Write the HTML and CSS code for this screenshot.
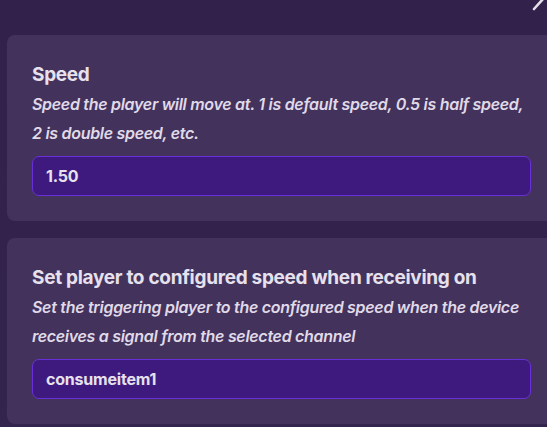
FILE: index.html
```html
<!DOCTYPE html>
<html>
<head>
<meta charset="utf-8">
<link rel="stylesheet" href="styles.css">
</head>
<body>
<svg class="corner-icon" width="16" height="12" viewBox="0 0 16 12"><path d="M3 9 L12 -1" stroke="#e4dfeb" stroke-width="2.6" stroke-linecap="round" fill="none"/></svg>
<div class="panel">
  <section class="card">
    <h2 class="title">Speed</h2>
    <p class="desc">Speed the player will move at. 1 is default speed, 0.5 is half speed, 2 is double speed, etc.</p>
    <div class="field">1.50</div>
  </section>
  <section class="card">
    <h2 class="title">Set player to configured speed when receiving on</h2>
    <p class="desc">Set the triggering player to the configured speed when the device receives a signal from the selected channel</p>
    <div class="field">consumeitem1</div>
  </section>
</div>
</body>
</html>
```
FILE: styles.css
```css
html, body {
  margin: 0;
  padding: 0;
}
body {
  width: 547px;
  height: 427px;
  overflow: hidden;
  background: linear-gradient(180deg, #32224b 0%, #33244d 100%);
  font-family: Inter, "Noto Sans", sans-serif;
  color: #e7e1ee;
  position: relative;
}
.corner-icon {
  position: absolute;
  right: 0;
  top: 0;
}
.panel {
  display: flex;
  flex-direction: column;
  gap: 17px;
  padding: 35px 0 0 7px;
}
.card {
  width: 549px;
  box-sizing: border-box;
  background: #42325c;
  border-radius: 8px;
  padding: 29px 25px 25px 25px;
}
.title {
  margin: 0;
  font-size: 19px;
  line-height: 22px;
  font-weight: 700;
  letter-spacing: -0.3px;
}
.desc {
  margin: 4px 0 8px 0;
  font-size: 16px;
  line-height: 29px;
  font-weight: 600;
  font-style: italic;
  letter-spacing: -0.3px;
  color: #e0dae8;
}
.field {
  box-sizing: border-box;
  height: 40px;
  width: 499px;
  border: 1px solid #6a30d8;
  border-radius: 7px;
  background: #3e1a7e;
  padding: 0 13px;
  display: flex;
  align-items: center;
  font-size: 16px;
  font-weight: 700;
  letter-spacing: -0.2px;
}
```
